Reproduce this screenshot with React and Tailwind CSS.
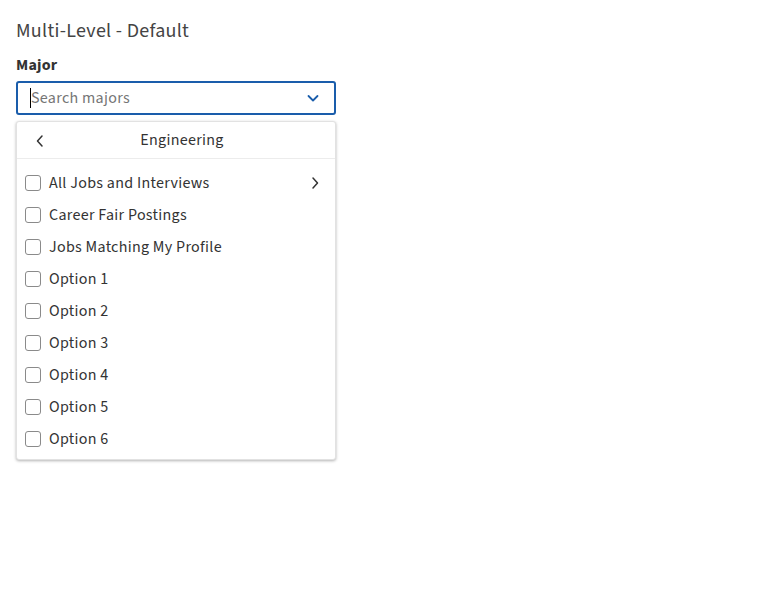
import React from "react";

const ChevronDown = () => (
  <svg width="14" height="14" viewBox="0 0 14 14" fill="none">
    <path d="M2.5 5l4.5 4.5L11.5 5" stroke="#1a5dab" strokeWidth="1.8" strokeLinecap="round" strokeLinejoin="round" />
  </svg>
);
const ChevronLeft = () => (
  <svg width="12" height="14" viewBox="0 0 12 14" fill="none">
    <path d="M8 2L3.5 7 8 12" stroke="#333" strokeWidth="1.5" strokeLinecap="round" strokeLinejoin="round" />
  </svg>
);
const ChevronRight = () => (
  <svg width="12" height="14" viewBox="0 0 12 14" fill="none">
    <path d="M4 2l4.5 5L4 12" stroke="#333" strokeWidth="1.5" strokeLinecap="round" strokeLinejoin="round" />
  </svg>
);

const items = [
  "All Jobs and Interviews",
  "Career Fair Postings",
  "Jobs Matching My Profile",
  "Option 1",
  "Option 2",
  "Option 3",
  "Option 4",
  "Option 5",
  "Option 6",
];

export default function App() {
  return (
    <div
      className="min-h-[592px] bg-white px-4 pt-[19px] tracking-[0.3px] text-[#333]"
      style={{ fontFamily: '"Source Sans Pro", "Source Sans 3", Lato, "Noto Sans", sans-serif' }}
    >
      <h1 className="text-[20px] leading-[24px] text-[#444]">Multi-Level - Default</h1>
      <div className="mt-[12px] w-[320px]">
        <div className="text-[16px] leading-[20px] font-bold tracking-[0.2px] text-[#333]">Major</div>
        <div className="mt-[6px] flex h-[34px] items-center rounded-[3px] border-2 border-[#1a5dab] pl-[12px] pr-[14px]">
          <span className="h-[20px] w-px bg-black" />
          <span className="flex-1 text-[16px] text-[#757575]">Search majors</span>
          <ChevronDown />
        </div>
        <div className="mt-[6px] rounded-[3px] border border-[#e2e2e2] bg-white shadow-[0_1px_3px_rgba(0,0,0,0.3)]">
          <div className="relative flex h-[37px] items-center justify-center border-b border-[#ececec]">
            <span className="absolute left-[17px] top-[12px]"><ChevronLeft /></span>
            <span className="pl-[12px] text-[16px] text-[#333]">Engineering</span>
          </div>
          <div className="pt-[8px] pb-[4px]">
            {items.map((t, i) => (
              <div key={t} className="flex h-[32px] items-center pl-[8px] pr-[14px]">
                <span className="h-[16px] w-[16px] rounded-[3px] border border-[#8a8a8a] bg-white" />
                <span className="ml-[8px] flex-1 text-[16px] text-[#333]">{t}</span>
                {i === 0 && <ChevronRight />}
              </div>
            ))}
          </div>
        </div>
      </div>
    </div>
  );
}
